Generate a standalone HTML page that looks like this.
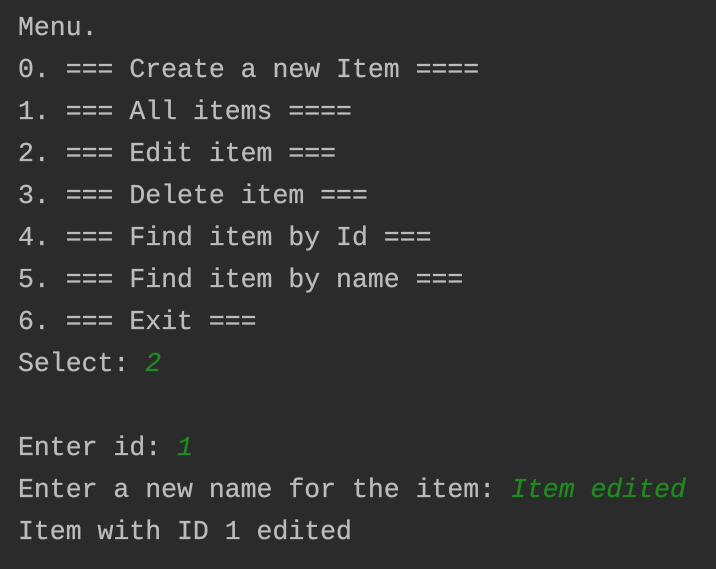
<!DOCTYPE html>
<html><head><meta charset="utf-8"><style>
html,body{margin:0;padding:0;background:#2b2b2b;width:716px;height:569px;overflow:hidden}
pre{margin:0;position:absolute;left:18px;top:7px;font-family:"Liberation Mono",monospace;font-size:26.5px;line-height:42px;color:#bbbbbb;white-space:pre;-webkit-text-stroke:0.3px #bbbbbb}
i{color:#1e8b1e;font-style:italic;-webkit-text-stroke:0.3px #1e8b1e}
</style></head><body><pre>Menu.
0. === Create a new Item ====
1. === All items ====
2. === Edit item ===
3. === Delete item ===
4. === Find item by Id ===
5. === Find item by name ===
6. === Exit ===
Select: <i>2</i>

Enter id: <i>1</i>
Enter a new name for the item: <i>Item edited</i>
Item with ID 1 edited</pre></body></html>
